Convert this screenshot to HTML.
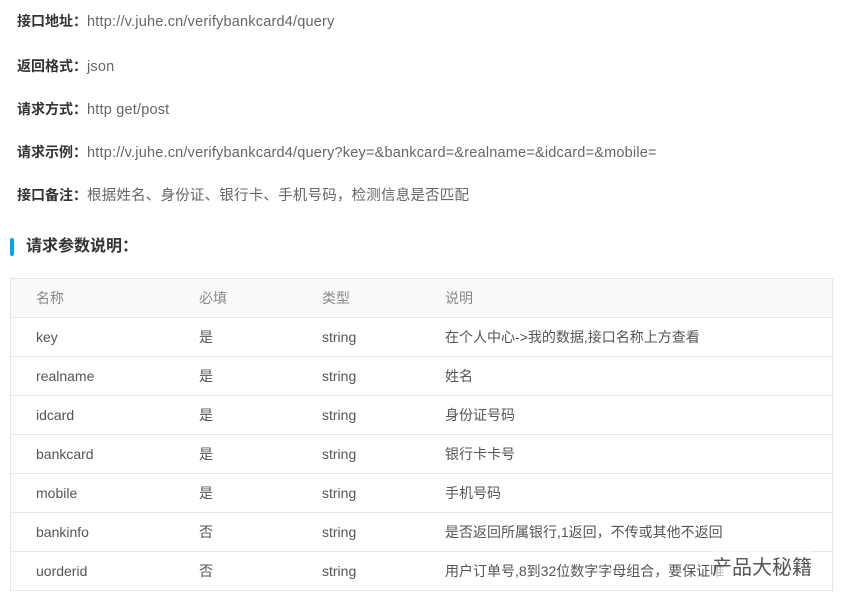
<!DOCTYPE html><html><head><meta charset="utf-8"><style>
body{margin:0;width:843px;height:601px;background:#fff;font-family:"Liberation Sans","Noto Sans CJK SC",sans-serif;font-size:14px;color:#666;position:relative;overflow:hidden}
.l{position:absolute;left:17px;line-height:20px;white-space:nowrap;font-size:14.5px;letter-spacing:0.2px}
.l b{color:#333;font-size:14px;letter-spacing:0}
h3{position:absolute;left:26px;top:236px;margin:0;font-size:16px;line-height:22px;color:#333}
.bar{position:absolute;left:10px;top:238px;width:4px;height:18px;background:#00a6f0;border-radius:2px}
table{position:absolute;left:10px;top:278px;width:823px;border-collapse:collapse;border:1px solid #e6e6e6}
td{height:38px;border-top:1px solid #e6e6e6;padding:0;color:#555;white-space:nowrap}
tr:first-child td{background:#fafafa;border-top:none;color:#888}
td:nth-child(1){padding-left:25px;width:163px}
td:nth-child(2){width:123px}
td:nth-child(3){width:123px}
.wm{position:absolute;left:712px;top:551px;font-size:20px;color:#555;background:rgba(255,255,255,.6)}
</style></head><body>
<div class="l" style="top:11px"><b>接口地址：</b>http://v.juhe.cn/verifybankcard4/query</div>
<div class="l" style="top:56px"><b>返回格式：</b>json</div>
<div class="l" style="top:99px"><b>请求方式：</b>http get/post</div>
<div class="l" style="top:142px"><b>请求示例：</b>http://v.juhe.cn/verifybankcard4/query?key=&amp;bankcard=&amp;realname=&amp;idcard=&amp;mobile=</div>
<div class="l" style="top:185px"><b>接口备注：</b>根据姓名、身份证、银行卡、手机号码，检测信息是否匹配</div>
<div class="bar"></div><h3>请求参数说明：</h3>
<table>
<tr><td>名称</td><td>必填</td><td>类型</td><td>说明</td></tr>
<tr><td>key</td><td>是</td><td>string</td><td>在个人中心-&gt;我的数据,接口名称上方查看</td></tr>
<tr><td>realname</td><td>是</td><td>string</td><td>姓名</td></tr>
<tr><td>idcard</td><td>是</td><td>string</td><td>身份证号码</td></tr>
<tr><td>bankcard</td><td>是</td><td>string</td><td>银行卡卡号</td></tr>
<tr><td>mobile</td><td>是</td><td>string</td><td>手机号码</td></tr>
<tr><td>bankinfo</td><td>否</td><td>string</td><td>是否返回所属银行,1返回，不传或其他不返回</td></tr>
<tr><td>uorderid</td><td>否</td><td>string</td><td>用户订单号,8到32位数字字母组合，要保证唯</td></tr>
</table>
<div class="wm">产品大秘籍</div>
</body></html>
